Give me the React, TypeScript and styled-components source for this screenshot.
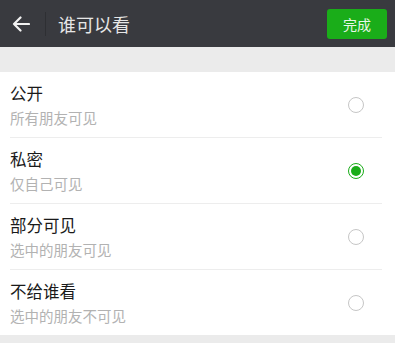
import React, { useState } from "react";
import styled, { createGlobalStyle } from "styled-components";

const GlobalStyle = createGlobalStyle`
  body {
    margin: 0;
    background: #ebebeb;
    font-family: "Noto Sans CJK SC", "Noto Sans", sans-serif;
  }
`;

const Page = styled.div`
  width: 395px;
  height: 343px;
  background: #ebebeb;
  overflow: hidden;
`;

const Header = styled.div`
  height: 47px;
  background: #393a3f;
  display: flex;
  align-items: center;
  padding: 0 8px 0 11px;
`;

const BackButton = styled.button`
  border: none;
  background: none;
  padding: 0;
  width: 20px;
  height: 20px;
  display: flex;
  align-items: center;
  justify-content: center;
  cursor: pointer;
`;

const Divider = styled.div`
  width: 1px;
  height: 24px;
  background: #2e2f33;
  margin: 0 12px 0 14px;
`;

const Title = styled.h1`
  flex: 1;
  margin: 0;
  font-size: 18px;
  font-weight: 400;
  color: #e6e6e6;
`;

const DoneButton = styled.button`
  border: none;
  border-radius: 3px;
  background: #1aad19;
  color: #e8f6e8;
  font-family: inherit;
  font-size: 14px;
  width: 60px;
  height: 30px;
  cursor: pointer;
`;

const List = styled.div`
  margin-top: 25px;
  background: #fff;
`;

const Row = styled.div<{ $last?: boolean }>`
  height: 65px;
  margin: 0 13px 0 10px;
  padding-right: 18px;
  display: flex;
  align-items: center;
  justify-content: space-between;
  border-bottom: ${({ $last }) => ($last ? "none" : "1px solid #ededed")};
  cursor: pointer;
`;

const Texts = styled.div`
  display: flex;
  flex-direction: column;
  gap: 4px;
`;

const Label = styled.div`
  font-size: 16.5px;
  color: #1a1a1a;
  line-height: 22px;
`;

const Sub = styled.div`
  font-size: 14.5px;
  color: #b2b2b2;
  line-height: 20px;
`;

const Radio = styled.div<{ $on: boolean }>`
  width: 14px;
  height: 14px;
  border-radius: 50%;
  border: 1.5px solid ${({ $on }) => ($on ? "#1aad19" : "#c6c6c6")};
  display: flex;
  align-items: center;
  justify-content: center;
  &::after {
    content: "";
    width: 10px;
    height: 10px;
    border-radius: 50%;
    background: #1aad19;
    display: ${({ $on }) => ($on ? "block" : "none")};
  }
`;

const options = [
  { title: "公开", desc: "所有朋友可见" },
  { title: "私密", desc: "仅自己可见" },
  { title: "部分可见", desc: "选中的朋友可见" },
  { title: "不给谁看", desc: "选中的朋友不可见" },
];

const App = () => {
  const [selected, setSelected] = useState(1);
  return (
    <Page>
      <GlobalStyle />
      <Header>
        <BackButton>
          <svg width="18" height="16" viewBox="0 0 18 16" fill="none">
            <path
              d="M17 8H2M8.5 1.5L2 8l6.5 6.5"
              stroke="#f2f2f2"
              strokeWidth="2.2"
              strokeLinecap="round"
              strokeLinejoin="round"
            />
          </svg>
        </BackButton>
        <Divider />
        <Title>谁可以看</Title>
        <DoneButton>完成</DoneButton>
      </Header>
      <List>
        {options.map((o, i) => (
          <Row key={o.title} $last={i === options.length - 1} onClick={() => setSelected(i)}>
            <Texts>
              <Label>{o.title}</Label>
              <Sub>{o.desc}</Sub>
            </Texts>
            <Radio $on={selected === i} />
          </Row>
        ))}
      </List>
    </Page>
  );
};

export default App;
